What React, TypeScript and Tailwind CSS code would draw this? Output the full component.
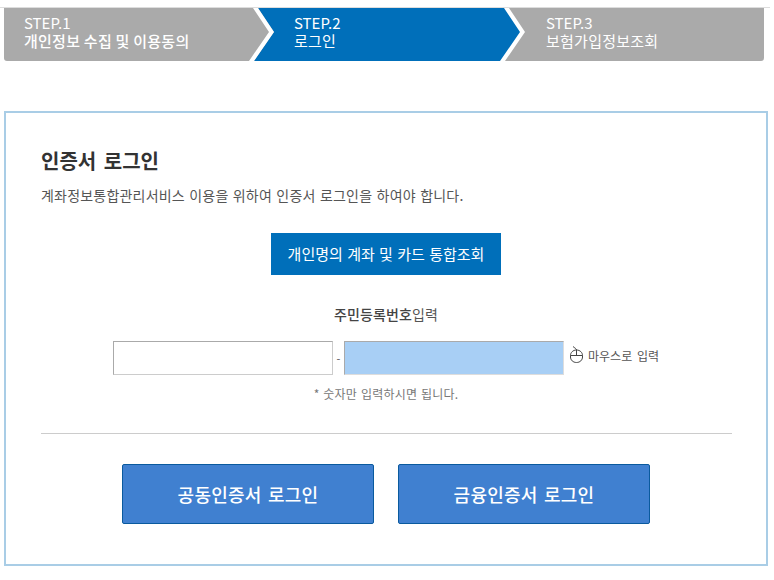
import React from 'react';

const FONT = "font-['Noto_Sans_CJK_KR','Noto_Sans',sans-serif]";

// 단계 사이의 흰색 화살표
const Chevron = ({ className }: { className: string }) => (
  <svg className={`absolute top-0 ${className}`} width="25" height="53" viewBox="0 0 25 53">
    <polygon points="4,0 9,0 25,24 5,53 0,53 20,24" fill="#fff" />
  </svg>
);

const MouseIcon = () => (
  <svg className="-translate-y-[1px]" width="13" height="17" viewBox="0 0 13 17" fill="none" stroke="#444" strokeWidth="1">
    <path d="M6.5 4C6.5 2.5 4.5 2 3 0.5" />
    <path d="M6.5 4C10 4 12.5 6.5 12.5 9.5V11C12.5 14 10 16.5 6.5 16.5C3 16.5 0.5 14 0.5 11V9.5C0.5 6.5 3 4 6.5 4Z" />
    <path d="M0.5 9.5H12.5M6.5 4V9.5" />
  </svg>
);

const StepText = ({ step, title, bold }: { step: string; title: string; bold?: boolean }) => (
  <div className="text-white text-[15px] leading-[18px] pt-[6px]">
    <div>{step}</div>
    <div className={`tracking-[0.25px] ${bold ? 'font-medium' : ''}`}>{title}</div>
  </div>
);

export default function App() {
  return (
    <div className={`${FONT} w-[774px] h-[580px] bg-white overflow-hidden`}>
      <div className="pt-[7px]">
        <div className="h-px bg-[#dddddd] mr-[4px]" />
      </div>

      {/* 단계 표시 */}
      <div className="relative flex ml-[4px] w-[760px] h-[53px] bg-[#aaaaaa] rounded-b-[3px]">
        <div className="w-[250px] pl-[20px]">
          <StepText step="STEP.1" title="개인정보 수집 및 이용동의" bold />
        </div>
        <div className="w-[272px] pl-[40px] bg-[#006fba] [clip-path:polygon(4px_0,254px_0,270px_24px,250px_53px,0_53px,20px_24px)]">
          <StepText step="STEP.2" title="로그인" />
        </div>
        <div className="flex-1 pl-[20px]">
          <StepText step="STEP.3" title="보험가입정보조회" />
        </div>
        <Chevron className="left-[245px]" />
        <Chevron className="left-[496px]" />
      </div>

      {/* 로그인 카드 */}
      <div className="mt-[50px] ml-[4px] w-[764px] h-[455px] border-2 border-[#a9cde6] px-[35px] pt-[33px]">
        <h1 className="text-[20px] leading-[30px] font-bold text-[#333333] [word-spacing:3px]">인증서 로그인</h1>
        <p className="mt-[10px] text-[14px] leading-[20px] tracking-[0.2px] [word-spacing:1px] text-[#555555] -translate-y-[1px]">
          계좌정보통합관리서비스 이용을 위하여 인증서 로그인을 하여야 합니다.
        </p>

        <div className="mt-[27px] flex justify-center">
          <button className="w-[230px] h-[42px] bg-[#006fba] text-white text-[15px] [word-spacing:1px]">
            개인명의 계좌 및 카드 통합조회
          </button>
        </div>

        <p className="mt-[29px] text-center text-[14px] leading-[20px] tracking-[0.15px] text-[#555555]">
          <span className="font-medium text-[#444444]">주민등록번호</span>입력
        </p>

        <div className="mt-[17px] flex justify-center items-center">
          <input className="w-[220px] h-[34px] bg-white border border-[#cccccc] border-t-[#aaaaaa] border-l-[#aaaaaa]" />
          <span className="w-[11px] text-center text-[11px] text-[#555555]">-</span>
          <input className="w-[220px] h-[34px] bg-[#a8cff5] border border-[#dddddd] border-t-[#aaaaaa] border-l-[#aaaaaa]" />
          <span className="ml-[6px] mb-[5px] flex items-center gap-[5px] text-[12px] [word-spacing:2px] text-[#555555]">
            <MouseIcon />
            마우스로 입력
          </span>
        </div>

        <p className="mt-[10px] text-center text-[12px] leading-[18px] tracking-[0.2px] [word-spacing:1px] text-[#777777]">
          * 숫자만 입력하시면 됩니다.
        </p>

        <div className="mt-[30px] -mr-[1px] h-px bg-[#cccccc]" />

        <div className="mt-[30px] flex justify-center gap-[24px]">
          <button className="w-[252px] h-[60px] bg-[#4080d0] border border-[#0a5a9e] rounded-[2px] text-white text-[18px] font-medium tracking-[0.25px] [word-spacing:2px]">
            공동인증서 로그인
          </button>
          <button className="w-[252px] h-[60px] bg-[#4080d0] border border-[#0a5a9e] rounded-[2px] text-white text-[18px] font-medium tracking-[0.25px] [word-spacing:2px]">
            금융인증서 로그인
          </button>
        </div>
      </div>
    </div>
  );
}
